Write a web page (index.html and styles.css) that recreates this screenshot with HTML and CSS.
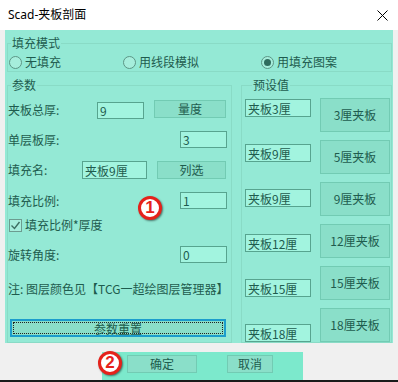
FILE: index.html
```html
<!DOCTYPE html>
<html>
  <head>
    <title>Scad-夹板剖面</title>
    <link rel="stylesheet" href="styles.css">
  </head>
  <body>
    <div class="titlebar">
      <span class="title">Scad-夹板剖面</span>
      <svg class="close" width="11" height="11" viewBox="0 0 11 11">
        <path d="M0.5 0.5 L10.5 10.5 M10.5 0.5 L0.5 10.5" stroke="#000" stroke-width="1" fill="none"/>
      </svg>
    </div>

    <div class="dialog">
      <fieldset class="mode">
        <legend>填充模式</legend>
        <div class="radios">
          <label class="radio r-none"><span class="dot"></span>无填充</label>
          <label class="radio r-line"><span class="dot"></span>用线段模拟</label>
          <label class="radio r-hatch"><span class="dot on"></span>用填充图案</label>
        </div>
      </fieldset>

      <div class="main">
        <fieldset class="params">
          <legend>参数</legend>
          <div class="row r1">
            <span class="lbl w89">夹板总厚:</span>
            <input class="field w47" value="9">
            <button class="btn b-measure">量度</button>
          </div>
          <div class="row r2">
            <span class="lbl">单层板厚:</span>
            <input class="field w47 right" value="3">
          </div>
          <div class="row r3">
            <span class="lbl w74">填充名:</span>
            <input class="field w65" value="夹板9厘">
            <button class="btn b-pick">列选</button>
          </div>
          <div class="row r4">
            <span class="lbl">填充比例:</span>
            <input class="field w47 right" value="1">
          </div>
          <div class="row r5">
            <span class="check">
              <svg width="11" height="11" viewBox="0 0 11 11">
                <polyline points="1.5,5.5 4.5,8.5 9.5,2" stroke="#3c6f62" stroke-width="1.4" fill="none"/>
              </svg>
            </span>
            <span>填充比例*厚度</span>
          </div>
          <div class="row r6">
            <span class="lbl">旋转角度:</span>
            <input class="field w47 right" value="0">
          </div>
          <div class="row note">注: 图层颜色见【TCG一超绘图层管理器】</div>
          <button class="btn reset"><span class="focus">参数重置</span></button>
        </fieldset>

        <fieldset class="presets">
          <legend>预设值</legend>
          <div class="preset-names">
            <input class="field pname" value="夹板3厘">
            <input class="field pname" value="夹板9厘">
            <input class="field pname" value="夹板9厘">
            <input class="field pname" value="夹板12厘">
            <input class="field pname" value="夹板15厘">
            <input class="field pname" value="夹板18厘">
          </div>
          <div class="preset-btns">
            <button class="btn pbtn">3厘夹板</button>
            <button class="btn pbtn">5厘夹板</button>
            <button class="btn pbtn">9厘夹板</button>
            <button class="btn pbtn">12厘夹板</button>
            <button class="btn pbtn">15厘夹板</button>
            <button class="btn pbtn">18厘夹板</button>
          </div>
        </fieldset>
      </div>
    </div>

    <div class="footer">
      <button class="btn ok">确定</button>
      <button class="btn cancel">取消</button>
    </div>
    <div class="edge"></div>

    <!-- annotation markers -->
    <span class="badge badge-1">1</span>
    <span class="badge badge-2">2</span>
  </body>
</html>
```

FILE: styles.css
```css
* {
  box-sizing: border-box;
}

body {
  margin: 0;
  width: 398px;
  height: 382px;
  overflow: hidden;
  position: relative;
  background: #f0f0f0;
  color: #1e5c4e;
  font: 12px/16px "Noto Sans CJK SC", sans-serif;
}

.titlebar {
  height: 30px;
  background: #fff;
  display: flex;
  align-items: center;
  justify-content: space-between;
  padding: 0 10px 0 8px;
}

.title {
  color: #000;
  font-family: "Noto Sans", "Noto Sans CJK SC", sans-serif;
  font-size: 12px;
}

.close {
  display: block;
}

.dialog {
  margin: 0 5px;
  height: 313px;
  background: #94e9d5;
  padding: 5px 1px 0 2px;
  display: flex;
  flex-direction: column;
}

fieldset {
  margin: 0;
  padding: 0;
  min-width: 0;
  border: 1px solid #89dbc6;
}

legend {
  padding: 0 1px;
  margin-left: 3px;
  line-height: 16px;
}

.mode {
  padding: 4px 0 2px;
}

.radios {
  display: flex;
  height: 14px;
  align-items: center;
  padding-left: 1px;
}

.radio {
  display: flex;
  align-items: center;
  gap: 3px;
}

.r-none {
  width: 114px;
}

.r-line {
  width: 138px;
}

.dot {
  width: 13px;
  height: 13px;
  border-radius: 50%;
  border: 1px solid #5c9686;
  background: #a6eedc;
  display: flex;
  align-items: center;
  justify-content: center;
}

.dot.on::after {
  content: "";
  width: 7px;
  height: 7px;
  border-radius: 50%;
  background: #2f6d5e;
}

.main {
  display: flex;
  gap: 9px;
  margin-top: 5px;
  flex: 1;
}

.params {
  width: 225px;
  padding: 0 4px 0 0;
}

.presets {
  flex: 1;
  display: flex;
  align-items: flex-start;
  gap: 9px;
  padding: 0 1px 0 3px;
}

.presets legend {
  margin-left: 7px;
}

.row {
  display: flex;
  align-items: center;
}

.lbl.w89 {
  width: 89px;
}

.lbl.w74 {
  width: 74px;
}

.field {
  height: 17px;
  padding: 0 2px;
  border: 1px solid #57a48f;
  background: #a2f4df;
  color: inherit;
  font: inherit;
  outline: none;
}

.w47 {
  width: 47px;
}

.w65 {
  width: 65px;
  height: 18px;
}

.right {
  margin-left: auto;
}

.btn {
  height: 18px;
  padding: 0;
  border: 1px solid #72cbb3;
  background: #8adfc9;
  color: inherit;
  font: inherit;
}

.r1 {
  margin-top: 7px;
  height: 20px;
}

.b-measure {
  width: 72px;
  margin-left: 10px;
  align-self: flex-start;
}

.r2 {
  margin-top: 11px;
  height: 17px;
}

.r3 {
  margin-top: 13px;
  height: 18px;
}

.b-pick {
  width: 69px;
  margin-left: 10px;
}

.r4 {
  margin-top: 13px;
  height: 17px;
}

.r5 {
  margin-top: 9px;
  height: 14px;
  gap: 3px;
}

.check {
  width: 13px;
  height: 13px;
  margin-left: 1px;
  border: 1px solid #6c9c90;
  background: #a6eedc;
  display: flex;
  align-items: center;
  justify-content: center;
}

.check svg {
  display: block;
}

.r6 {
  margin-top: 14px;
  height: 17px;
}

.note {
  margin-top: 18px;
  height: 16px;
}

.reset {
  display: block;
  width: 216px;
  margin: 22px 0 0 2px;
  border: 2px solid #1c9dcc;
  padding: 1px;
  background: #8adfc9;
}

.reset .focus {
  display: block;
  height: 12px;
  line-height: 12px;
  border: 1px dotted #222;
}

.preset-names {
  display: flex;
  flex-direction: column;
  gap: 27px;
  margin-top: 6px;
}

.pname {
  width: 66px;
  height: 18px;
}

.preset-btns {
  display: flex;
  flex-direction: column;
  gap: 8px;
  margin-top: 5px;
}

.pbtn {
  width: 70px;
  height: 34px;
}

.footer {
  margin: 9px 0 0 102px;
  width: 201px;
  height: 28px;
  background: #7ce9cc;
  display: flex;
  align-items: flex-start;
  padding: 3px 0 0 25px;
}

.ok {
  width: 70px;
}

.cancel {
  width: 46px;
  margin-left: 30px;
}

.edge {
  height: 2px;
  background: #1a1a1a;
}

.badge {
  position: absolute;
  width: 24px;
  height: 24px;
  border-radius: 50%;
  background: #fff;
  border: 3px solid #e5221b;
  color: #e5221b;
  font: bold 17px/18px "Liberation Sans", sans-serif;
  text-align: center;
  box-shadow: 1px 1px 2px rgba(0, 0, 0, 0.5);
}

.badge-1 {
  left: 138px;
  top: 196px;
}

.badge-2 {
  left: 98px;
  top: 351px;
}
```
